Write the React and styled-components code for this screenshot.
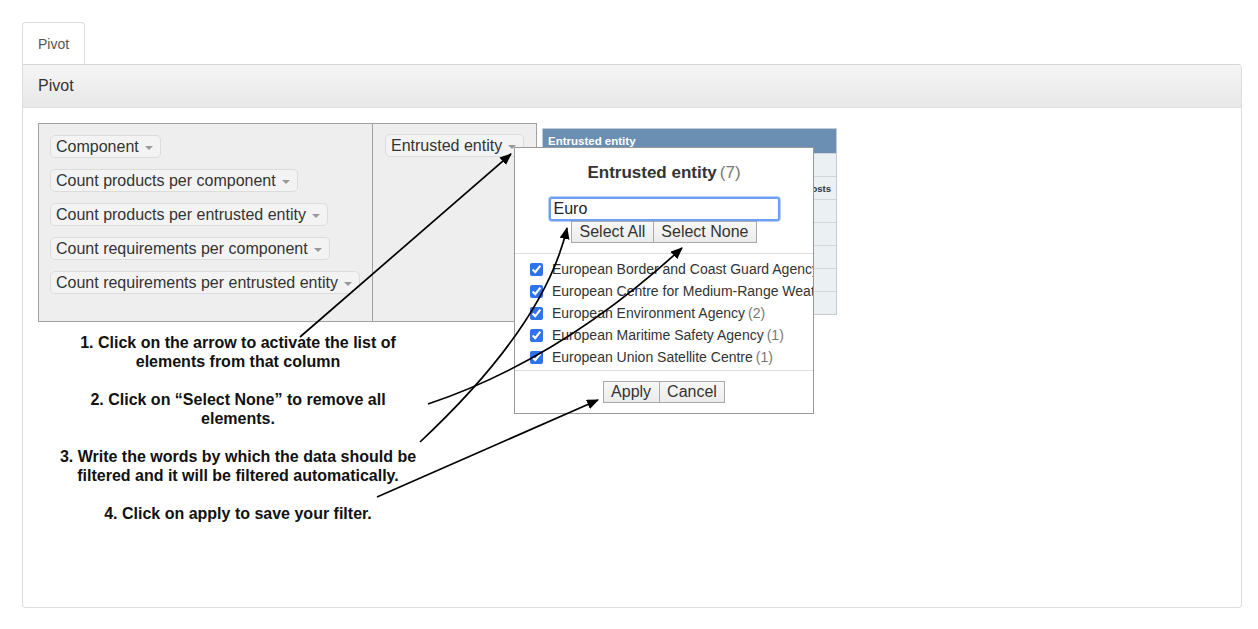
import React from 'react';
import styled, { createGlobalStyle } from 'styled-components';

const GlobalStyle = createGlobalStyle`
  html, body {
    margin: 0;
    padding: 0;
    background: #fff;
  }
  body {
    font-family: "Liberation Sans", Helvetica, Arial, sans-serif;
    color: #333;
  }
`;

const Page = styled.div`
  position: relative;
  box-sizing: border-box;
  width: 1258px;
  height: 629px;
  padding: 22px 16px 0 22px;
`;

const Tabs = styled.div`
  display: flex;
`;

const Tab = styled.div`
  display: flex;
  align-items: center;
  box-sizing: border-box;
  height: 42px;
  padding: 0 15px;
  border: 1px solid #ddd;
  border-bottom: none;
  border-radius: 4px 4px 0 0;
  font-size: 14px;
  color: #555;
  background: #fff;
`;

const Panel = styled.div`
  box-sizing: border-box;
  height: 544px;
  border: 1px solid #ddd;
  border-top-color: #d4d4d4;
  border-radius: 0 4px 4px 4px;
  overflow: hidden;
`;

const PanelHeading = styled.div`
  display: flex;
  align-items: center;
  height: 42px;
  padding: 0 15px;
  border-bottom: 1px solid #ddd;
  background: linear-gradient(#f5f5f5, #e8e8e8);
  font-size: 16px;
  color: #333;
`;

const PanelBody = styled.div`
  padding: 15px;
`;

const PivotFrame = styled.div`
  position: relative;
  display: flex;
  align-items: flex-start;
`;

const FieldCell = styled.div`
  box-sizing: border-box;
  width: ${(p) => p.$width}px;
  height: 199px;
  margin-left: ${(p) => (p.$joined ? -1 : 0)}px;
  padding: ${(p) => p.$pad};
  display: flex;
  flex-direction: column;
  align-items: flex-start;
  gap: 11px;
  background: #eee;
  border: 1px solid #a2a2a2;
`;

const Pill = styled.span`
  display: inline-flex;
  align-items: center;
  box-sizing: border-box;
  height: 23px;
  padding: 0 7px 0 5px;
  background: #f3f3f3;
  border: 1px solid #dcdcdc;
  border-radius: 5px;
  font-size: 16px;
  color: #333;
  white-space: nowrap;
`;

const Caret = styled.span`
  width: 0;
  height: 0;
  margin-left: 6px;
  margin-top: 2px;
  border-left: 4px solid transparent;
  border-right: 4px solid transparent;
  border-top: 4px solid #999;
`;

const Output = styled.div`
  box-sizing: border-box;
  width: 295px;
  margin: 5px 0 0 5px;
  border: 1px solid #c3ccd3;
`;

const HeadRow = styled.div`
  display: flex;
  align-items: center;
  height: 24px;
  padding-left: 5px;
  background: #6a8fb2;
  color: #fff;
  font-size: 11.5px;
  font-weight: bold;
`;

const BodyRow = styled.div`
  display: flex;
  align-items: center;
  justify-content: flex-end;
  height: 22px;
  padding-right: 5px;
  border-top: 1px solid #cfd7dc;
  background: #ebf0f2;
  font-size: 9.5px;
  font-weight: bold;
  color: #333;
`;

const Popup = styled.div`
  position: absolute;
  left: 476px;
  top: 24px;
  z-index: 2;
  box-sizing: border-box;
  width: 300px;
  height: 267px;
  padding-top: 14px;
  background: #fff;
  border: 1px solid #999;
  overflow: hidden;
`;

const PopupTitle = styled.div`
  height: 22px;
  line-height: 22px;
  text-align: center;
  font-size: 17px;
  font-weight: bold;
  color: #333;
`;

const Count = styled.span`
  font-weight: normal;
  color: #777;
  margin-left: ${(p) => (p.$gap ? 3 : 0)}px;
`;

const Search = styled.input`
  display: block;
  box-sizing: border-box;
  width: 231px;
  height: 24px;
  margin: 13px auto 0;
  padding: 0 3px;
  border: 2px solid #6d9ff5;
  border-radius: 3px;
  box-shadow: 0 0 0 1px #b9d0fa;
  outline: none;
  font-family: inherit;
  font-size: 16px;
  color: #222;
`;

const ButtonRow = styled.div`
  display: flex;
  justify-content: center;
  margin-top: ${(p) => p.$top}px;
`;

const Button = styled.button`
  box-sizing: border-box;
  height: 22px;
  padding: 0 7.5px;
  margin-left: ${(p) => (p.$first ? 0 : -1)}px;
  border: 1px solid #aaa;
  background: linear-gradient(#f8f8f8, #ebebeb);
  font-family: inherit;
  font-size: 16px;
  line-height: 20px;
  color: #333;
`;

const Rule = styled.div`
  height: 1px;
  margin-top: ${(p) => p.$top}px;
  background: #ddd;
`;

const List = styled.div`
  padding: 4px 0 2px;
`;

const Item = styled.label`
  display: flex;
  align-items: center;
  height: 22px;
  padding-left: 15px;
  font-size: 14px;
  color: #333;
  white-space: nowrap;
`;

const Check = styled.input`
  width: 13px;
  height: 13px;
  margin: 0 9px 0 0;
  accent-color: #2f72ee;
`;

const Notes = styled.div`
  width: 400px;
  margin-top: 11px;
  text-align: center;
  font-size: 16px;
  font-weight: bold;
  line-height: 19px;
  color: #111;
`;

const Note = styled.p`
  margin: 0 0 19px;
`;

const Arrows = styled.svg`
  position: absolute;
  left: 0;
  top: 0;
  z-index: 3;
  pointer-events: none;
`;

const fields = [
  'Component',
  'Count products per component',
  'Count products per entrusted entity',
  'Count requirements per component',
  'Count requirements per entrusted entity',
];

const entities = [
  { name: 'European Border and Coast Guard Agency', count: 1 },
  { name: 'European Centre for Medium-Range Weather Forecasts', count: 1 },
  { name: 'European Environment Agency', count: 2 },
  { name: 'European Maritime Safety Agency', count: 1 },
  { name: 'European Union Satellite Centre', count: 1 },
];

const arrowPaths = [
  'M300 337 L511 154',
  'M428 404 Q560 360 682 248',
  'M420 442 Q545 325 567 228',
  'M377 497 L598 400',
];

const App = () => (
  <Page>
    <GlobalStyle />
    <Tabs>
      <Tab>Pivot</Tab>
    </Tabs>
    <Panel>
      <PanelHeading>Pivot</PanelHeading>
      <PanelBody>
        <PivotFrame>
          <FieldCell $width={335} $pad="11px">
            {fields.map((f) => (
              <Pill key={f}>
                {f}
                <Caret />
              </Pill>
            ))}
          </FieldCell>
          <FieldCell $width={165} $pad="10px 12px" $joined>
            <Pill>
              Entrusted entity
              <Caret />
            </Pill>
          </FieldCell>
          <Output>
            <HeadRow>Entrusted entity</HeadRow>
            <BodyRow />
            <BodyRow>Costs</BodyRow>
            <BodyRow />
            <BodyRow />
            <BodyRow />
            <BodyRow />
            <BodyRow />
          </Output>

          <Popup>
            <PopupTitle>
              Entrusted entity<Count $gap>(7)</Count>
            </PopupTitle>
            <Search defaultValue="Euro" />
            <ButtonRow $top={0}>
              <Button $first>Select All</Button>
              <Button>Select None</Button>
            </ButtonRow>
            <Rule $top={10} />
            <List>
              {entities.map((e) => (
                <Item key={e.name}>
                  <Check type="checkbox" defaultChecked />
                  {e.name}
                  <Count $gap>({e.count})</Count>
                </Item>
              ))}
            </List>
            <Rule $top={0} />
            <ButtonRow $top={10}>
              <Button $first>Apply</Button>
              <Button>Cancel</Button>
            </ButtonRow>
          </Popup>
        </PivotFrame>

        <Notes>
          <Note>
            1. Click on the arrow to activate the list of
            <br />
            elements from that column
          </Note>
          <Note>
            2. Click on “Select None” to remove all
            <br />
            elements.
          </Note>
          <Note>
            3. Write the words by which the data should be
            <br />
            filtered and it will be filtered automatically.
          </Note>
          <Note>4. Click on apply to save your filter.</Note>
        </Notes>
      </PanelBody>
    </Panel>

    <Arrows width="1258" height="629" viewBox="0 0 1258 629">
      <defs>
        <marker
          id="head"
          markerUnits="userSpaceOnUse"
          markerWidth="12"
          markerHeight="10"
          refX="11"
          refY="5"
          orient="auto"
        >
          <path d="M0 0 L12 5 L0 10 Z" fill="#000" />
        </marker>
      </defs>
      {arrowPaths.map((d) => (
        <path key={d} d={d} fill="none" stroke="#000" strokeWidth="1.7" markerEnd="url(#head)" />
      ))}
    </Arrows>
  </Page>
);

export default App;
